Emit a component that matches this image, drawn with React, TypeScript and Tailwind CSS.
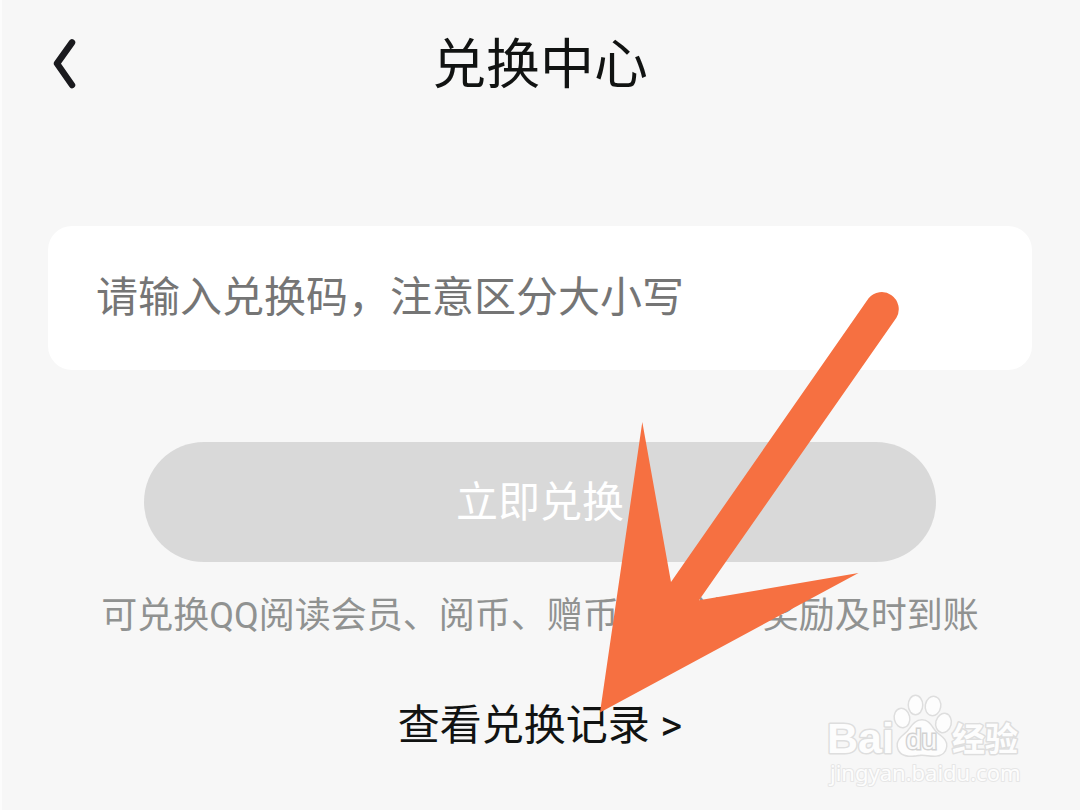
import React from "react";

function BackIcon() {
  return (
    <svg viewBox="0 0 32 52" className="h-[52px] w-8" fill="none" aria-hidden="true">
      <path
        d="M24 4.500 9 25.500 24 47"
        stroke="#1a1a1e"
        strokeWidth="6.500"
        strokeLinecap="round"
        strokeLinejoin="round"
      />
    </svg>
  );
}

function PointerArrow() {
  return (
    <svg
      viewBox="0 0 300 422"
      className="pointer-events-none absolute left-1/2 top-[291px] ml-[60px] h-[422px] w-[300px]"
      aria-hidden="true"
    >
      <path
        d="M0 421.500 42.300 131 71 291 268.600 7.300A17 17 0 0 1 296.400 26.700L99 309.300 258.500 282Z"
        fill="#f67041"
      />
    </svg>
  );
}

function Watermark() {
  return (
    <svg
      viewBox="0 0 208 102"
      className="pointer-events-none absolute right-[48px] top-[690px] h-[102px] w-[208px]"
      role="img"
      aria-label="Baidu 经验"
    >
      <g fill="#fdfdfd" stroke="#dedede" strokeWidth="3" paintOrder="stroke" strokeLinejoin="round">
        <text x="3" y="63" className="font-['Liberation_Sans',sans-serif] text-[43px] font-bold">
          Bai
        </text>
        <ellipse cx="78" cy="28" rx="7" ry="9" transform="rotate(-12 78 28)" />
        <ellipse cx="91.500" cy="15" rx="6.500" ry="9" />
        <ellipse cx="109" cy="16" rx="7" ry="9" transform="rotate(10 109 16)" />
        <ellipse cx="119.500" cy="33" rx="7" ry="9" transform="rotate(14 119.500 33)" />
        <path d="M98 30.500c-7 0-10 6-14 11-5 5-11 8-10 15 1 7 7 9 13 9 5 0 7-1 11-1s7 1 12 1c6 0 11-2 12-9 1-7-6-10-11-15-4-5-6-11-13-11Z" />
        <text x="128" y="61" className="font-['Noto_Sans_CJK_SC',sans-serif] text-[33px] font-bold">
          经验
        </text>
        <text
          x="6"
          y="91"
          stroke="#e6e6e6"
          strokeWidth="2"
          className="font-['Noto_Sans',sans-serif] text-[22px] font-normal"
        >
          jingyan.baidu.com
        </text>
      </g>
      <text
        x="82"
        y="59"
        fill="#fafafa"
        stroke="#d2d2d2"
        strokeWidth="3"
        paintOrder="stroke"
        className="font-['Liberation_Sans',sans-serif] text-[28px]"
      >
        du
      </text>
    </svg>
  );
}

export default function App() {
  return (
    <main className="relative min-h-screen overflow-hidden bg-[#f7f7f7] font-[Roboto,'Noto_Sans_CJK_SC',sans-serif] text-[#111312] shadow-[inset_2px_0_0_#fcfcfc]">
      <header className="grid h-32 grid-cols-[1fr_auto_1fr] items-center px-12">
        <button type="button" aria-label="返回" className="justify-self-start">
          <BackIcon />
        </button>
        <h1 className="pt-1 text-[54px] font-normal leading-[80px]">兑换中心</h1>
      </header>

      <form
        className="mt-[98px] flex flex-col px-12"
        onSubmit={(event) => event.preventDefault()}
      >
        <input
          type="text"
          aria-label="兑换码"
          placeholder="请输入兑换码，注意区分大小写"
          className="h-36 w-full rounded-3xl bg-white px-12 pb-0.5 text-[42px] outline-none placeholder:text-[#757575]"
        />
        <button
          type="submit"
          className="mx-24 mt-[72px] h-[120px] rounded-full bg-[#d9d9d9] text-[42px] text-white"
        >
          立即兑换
        </button>
      </form>

      <p className="mt-[26px] text-center text-[36px] leading-[56px] text-[#909291]">
        可兑换QQ阅读会员、阅币、赠币等权益，奖励及时到账
      </p>

      <div className="mt-[50px] text-center">
        <a href="#records" className="text-[42px] leading-[64px]">
          查看兑换记录 &gt;
        </a>
      </div>

      <PointerArrow />
      <Watermark />
    </main>
  );
}
